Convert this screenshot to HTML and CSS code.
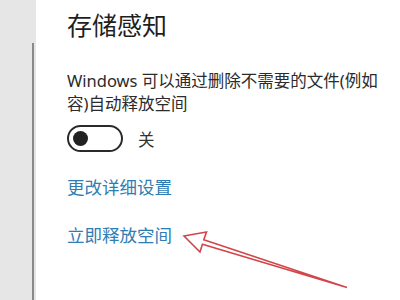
FILE: index.html
```html
<!DOCTYPE html>
<html lang="zh-CN">
<head>
<meta charset="utf-8">
<link rel="stylesheet" href="styles.css">
</head>
<body>
<div class="page">
  <aside class="side"><div class="side-line"></div></aside>
  <main class="content">
    <h1 class="title">存储感知</h1>
    <p class="desc">Windows 可以通过删除不需要的文件(例如<br>容)自动释放空间</p>
    <div class="toggle-row">
      <span class="toggle"><span class="thumb"></span></span>
      <span class="toggle-label">关</span>
    </div>
    <a class="link link-first">更改详细设置</a>
    <a class="link link-second">立即释放空间</a>
  </main>
  <svg class="arrow" width="400" height="300" viewBox="0 0 400 300">
    <polygon points="184,236 206.5,232 203.8,239.8 347,287.5 202.4,244.2 200,252" fill="none" stroke="#d2464a" stroke-width="1.6" stroke-linejoin="miter"/>
  </svg>
</div>
</body>
</html>
```

FILE: styles.css
```css
html, body {
  margin: 0;
  padding: 0;
  background: #ffffff;
}
.page {
  position: relative;
  display: flex;
  width: 400px;
  height: 300px;
  overflow: hidden;
  font-family: "Noto Sans", "Noto Sans CJK SC", sans-serif;
}
.side {
  width: 36px;
  flex: none;
  background: #e6e6e6;
  display: flex;
  flex-direction: column;
}
.side-line {
  margin-top: 43px;
  margin-left: 32px;
  width: 2px;
  flex: 1;
  background: #8a8a8a;
}
.content {
  flex: 1;
  padding-left: 31px;
  display: flex;
  flex-direction: column;
  align-items: flex-start;
}
.title {
  margin: 7px 0 0 0;
  font-family: "Noto Sans CJK SC", sans-serif;
  font-size: 25px;
  font-weight: 400;
  line-height: 34px;
  color: #1f1f1f;
}
.desc {
  margin: 28px 0 0 0;
  font-size: 16.5px;
  line-height: 23px;
  color: #2b2b2b;
  white-space: nowrap;
}
.toggle-row {
  display: flex;
  align-items: center;
  margin-top: 10px;
  gap: 15px;
}
.toggle {
  box-sizing: border-box;
  width: 56px;
  height: 27px;
  border: 2.5px solid #2a2a2a;
  border-radius: 14px;
  display: flex;
  align-items: center;
  padding-left: 4px;
}
.thumb {
  width: 15px;
  height: 15px;
  border-radius: 50%;
  background: #222;
}
.toggle-label {
  font-family: "Noto Sans CJK SC", sans-serif;
  font-size: 16.5px;
  color: #333;
}
.link {
  font-family: "Noto Sans CJK SC", sans-serif;
  font-size: 17.5px;
  line-height: 24px;
  color: #2f7db3;
  text-decoration: none;
}
.link-first {
  margin-top: 23px;
}
.link-second {
  margin-top: 24px;
}
.arrow {
  position: absolute;
  left: 0;
  top: 0;
  pointer-events: none;
}
```
